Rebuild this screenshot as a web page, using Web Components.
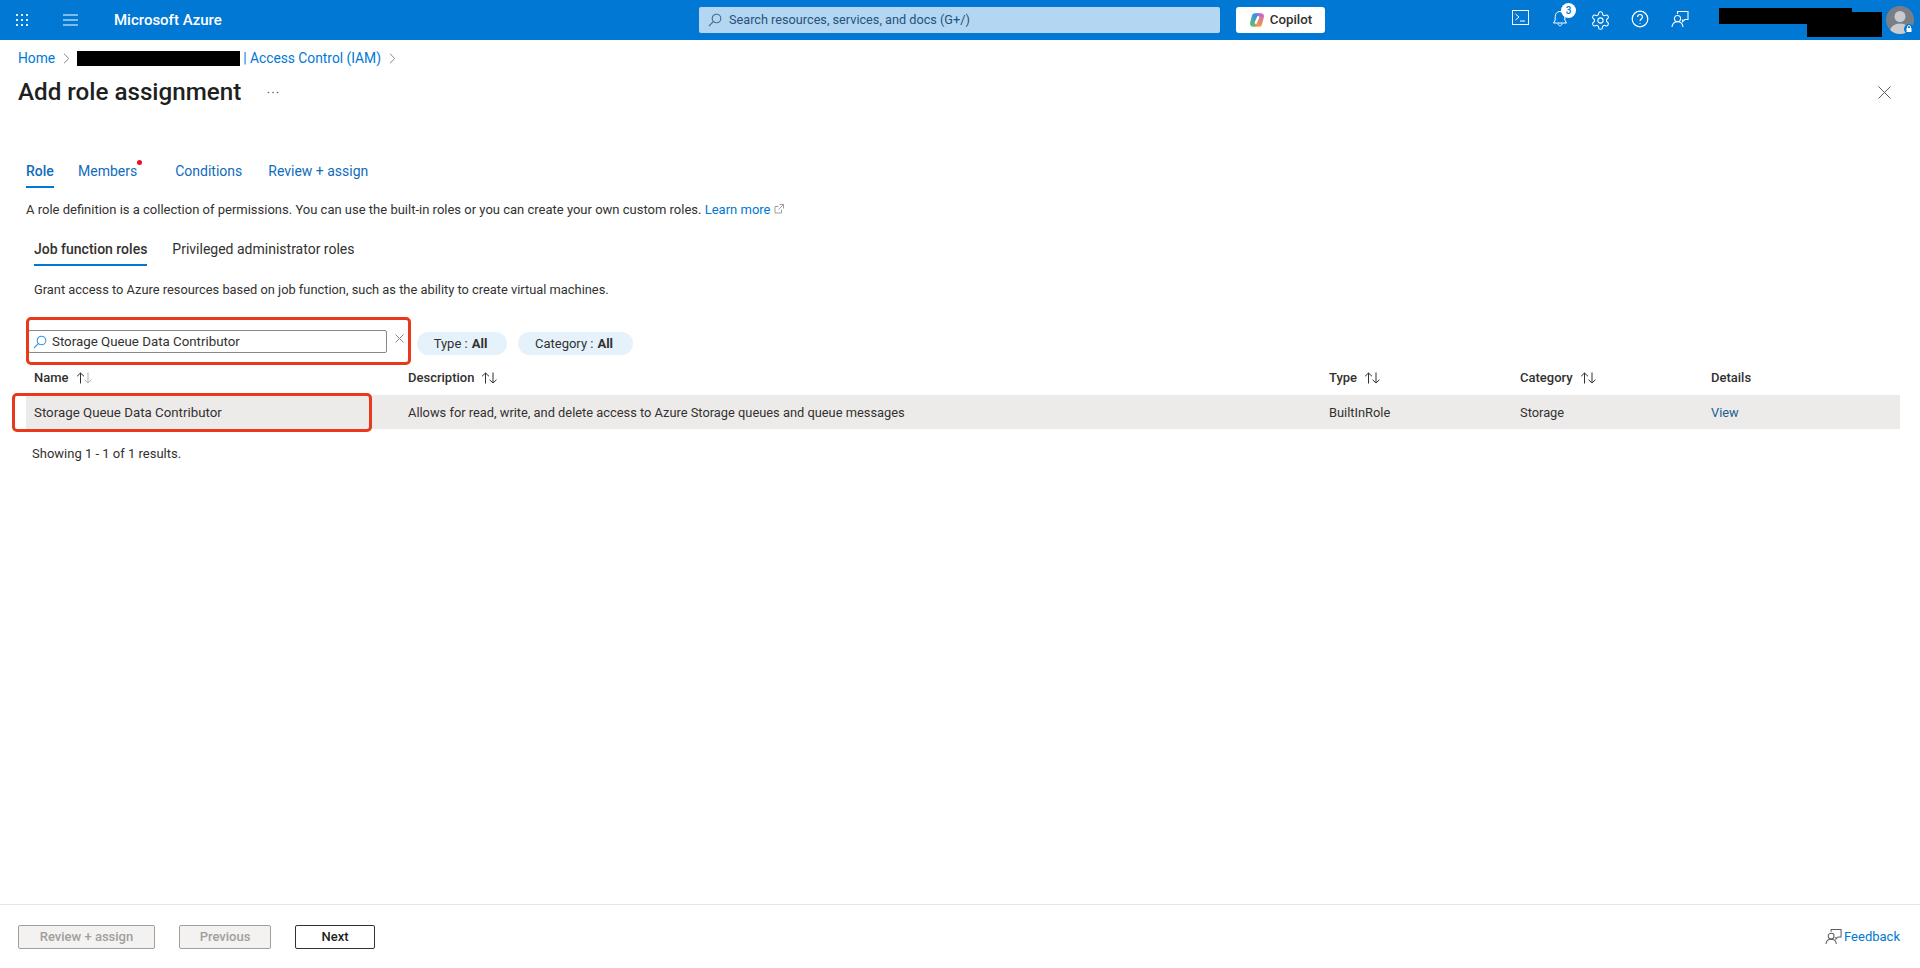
<!DOCTYPE html>
<html lang="en">
<head>
<meta charset="utf-8">
<title>Add role assignment - Microsoft Azure</title>
<style>
    html, body { margin: 0; height: 100%; }
    body {
        display: flex;
        flex-direction: column;
        height: 968px;
        overflow: hidden;
        background: #fff;
        color: #323130;
        font: 13px/20px Roboto, "Noto Sans", sans-serif;
    }
</style>
</head>
<body>
<az-topbar></az-topbar>
<az-breadcrumb></az-breadcrumb>
<az-blade-title>Add role assignment</az-blade-title>
<az-role-panel></az-role-panel>
<az-footer></az-footer>

<script>
const feedbackIcon = (size, color) => `
    <svg width="${size}" height="${size}" viewBox="0 0 18 18" fill="none" stroke="${color}" stroke-width="1.1">
        <path d="M6.5 4V1.5h10.5v8h-3.2l-2.3 2.2V9.5"/>
        <circle cx="6.5" cy="8.6" r="3.1"/>
        <path d="M1 17c.3-3.2 2.6-5.2 5.5-5.2S11.700 13.800 12 17"/>
    </svg>`;

customElements.define('az-topbar', class extends HTMLElement {
    constructor() {
        super();
        this.attachShadow({ mode: 'open' });
    }

    connectedCallback() {
        this.shadowRoot.innerHTML = `
        <style>
            :host { display: flex; align-items: center; flex: none; height: 40px; background: #0078d4; color: #fff; position: relative; }
            .waffle { display: grid; grid-template-columns: repeat(3, 2px); gap: 3px; margin-left: 16px; }
            .waffle i { width: 2px; height: 2px; background: #e3f0fa; }
            .burger { margin-left: 35px; display: flex; }
            .brand { margin-left: 36px; font-size: 15px; font-weight: 500; width: 232px; white-space: nowrap; }
            .search { margin-left: 353px; width: 521px; height: 26px; box-sizing: border-box; background: #b3d6f2; border-radius: 2px; display: flex; align-items: center; padding-left: 9px; color: #24527a; font-size: 12.700px; }
            .search svg { margin-right: 7px; }
            .copilot { margin-left: 16px; width: 89px; height: 26px; background: #fff; border-radius: 3px; display: flex; align-items: center; justify-content: center; gap: 5px; color: #323130; font-size: 13.300px; font-weight: 500; }
            .icon { width: 40px; display: flex; justify-content: center; position: relative; }
            .icons { display: flex; margin-left: 175px; }
            .badge { position: absolute; top: -7px; left: 21px; width: 15px; height: 15px; border-radius: 50%; background: #fff; color: #0078d4; font-size: 10px; font-weight: 500; line-height: 15px; text-align: center; }
            .redact { position: absolute; background: #000; }
            .avatar { position: absolute; right: 6px; top: 6px; }
        </style>
        <div class="waffle">${'<i></i>'.repeat(9)}</div>
        <span class="burger">
            <svg width="15" height="12" viewBox="0 0 15 12" stroke="#fff" stroke-width="1"><path d="M0 1h15M0 6h15M0 11h15"/></svg>
        </span>
        <span class="brand">Microsoft Azure</span>
        <div class="search">
            <svg width="14" height="14" viewBox="0 0 14 14" fill="none" stroke="#3f6d93" stroke-width="1.100"><circle cx="8.500" cy="5.500" r="4.300"/><path d="M5.300 8.700L1 13"/></svg>
            Search resources, services, and docs (G+/)
        </div>
        <div class="copilot">
            <svg width="16" height="16" viewBox="0 0 16 16">
                <defs>
                    <linearGradient id="cpa" x1="0.600" y1="0" x2="0.200" y2="1"><stop offset="0" stop-color="#2f8fe8"/><stop offset="1" stop-color="#5cc46a"/></linearGradient>
                    <linearGradient id="cpb" x1="0.500" y1="0" x2="0.600" y2="1"><stop offset="0" stop-color="#c45fd6"/><stop offset="1" stop-color="#f6a13c"/></linearGradient>
                </defs>
                <path fill="url(#cpa)" d="M5.500 1.200H10.500L7 14.800H4.200C1.800 14.800.5 12.800 1.100 10.700L3 3.600C3.400 2.200 4.300 1.200 5.500 1.200z"/>
                <path fill="url(#cpb)" d="M10.500 14.800H5.500L9 1.200H11.800C14.200 1.200 15.500 3.200 14.900 5.300L13 12.400C12.600 13.800 11.700 14.800 10.500 14.800z"/>
                <path stroke="#fff" stroke-width="2.400" stroke-linecap="round" d="M9.200 5.300L6.800 10.700"/>
            </svg>
            Copilot
        </div>
        <div class="icons">
            <span class="icon">
                <svg width="17" height="15" viewBox="0 0 17 15" fill="none" stroke="#fff" stroke-width="1"><rect x=".5" y=".5" width="16" height="14"/><path d="M3.500 4l3.500 3-3.500 3M8 11h5"/></svg>
            </span>
            <span class="icon">
                <svg width="16" height="17" viewBox="0 0 16 17" fill="none" stroke="#fff" stroke-width="1"><path d="M8 1.500c-3 0-4.800 2.200-4.800 5v3.500L1.500 13h13l-1.700-3V6.500c0-2.800-1.800-5-4.800-5zM6 13.500c0 1.300 1 2.300 2 2.300s2-1 2-2.300"/></svg>
                <span class="badge">3</span>
            </span>
            <span class="icon">
                <svg width="21" height="21" viewBox="0 0 24 24" fill="none" stroke="#fff" stroke-width="1.200"><path d="M12.220 2h-.44a2 2 0 0 0-2 2v.18a2 2 0 0 1-1 1.730l-.43.25a2 2 0 0 1-2 0l-.15-.08a2 2 0 0 0-2.730.73l-.22.38a2 2 0 0 0 .73 2.730l.15.1a2 2 0 0 1 1 1.720v.51a2 2 0 0 1-1 1.740l-.15.09a2 2 0 0 0-.73 2.730l.22.38a2 2 0 0 0 2.730.73l.15-.08a2 2 0 0 1 2 0l.43.25a2 2 0 0 1 1 1.730V20a2 2 0 0 0 2 2h.44a2 2 0 0 0 2-2v-.18a2 2 0 0 1 1-1.730l.43-.25a2 2 0 0 1 2 0l.15.08a2 2 0 0 0 2.730-.73l.22-.39a2 2 0 0 0-.73-2.730l-.15-.08a2 2 0 0 1-1-1.740v-.5a2 2 0 0 1 1-1.740l.15-.09a2 2 0 0 0 .73-2.730l-.22-.38a2 2 0 0 0-2.730-.73l-.15.08a2 2 0 0 1-2 0l-.43-.25a2 2 0 0 1-1-1.730V4a2 2 0 0 0-2-2z"/><circle cx="12" cy="12" r="3"/></svg>
            </span>
            <span class="icon">
                <svg width="18" height="18" viewBox="0 0 18 18" fill="none" stroke="#fff" stroke-width="1.200"><circle cx="9" cy="9" r="7.800"/><path d="M6.500 7c0-1.500 1.100-2.500 2.500-2.500S11.500 5.500 11.500 7c0 1.900-2.500 2-2.500 4"/><circle cx="9" cy="13.300" r=".6" fill="#fff" stroke="none"/></svg>
            </span>
            <span class="icon">${feedbackIcon(18, '#fff')}</span>
        </div>
        <span class="redact" style="left:1719px;top:8px;width:133px;height:16px"></span>
        <span class="redact" style="left:1807px;top:12px;width:75px;height:25px"></span>
        <svg class="avatar avatar-svg" width="28" height="28" viewBox="0 0 28 28">
            <defs><clipPath id="av"><circle cx="14" cy="14" r="14"/></clipPath></defs>
            <circle cx="14" cy="14" r="14" fill="#7a7f87"/>
            <g clip-path="url(#av)" fill="#c9cbce"><circle cx="14" cy="10.500" r="5.500"/><ellipse cx="14" cy="25" rx="10" ry="7.500"/></g>
            <circle cx="23" cy="23" r="5" fill="#0078d4"/>
            <rect x="20.500" y="22" width="5" height="4" rx=".6" fill="#fff"/>
            <path d="M21.500 22v-1a1.500 1.500 0 0 1 3 0v1" fill="none" stroke="#fff" stroke-width=".9"/>
        </svg>
        `;
    }
});

customElements.define('az-breadcrumb', class extends HTMLElement {
    constructor() {
        super();
        this.attachShadow({ mode: 'open' });
    }

    connectedCallback() {
        const chevron = `<svg width="7" height="11" viewBox="0 0 7 11" fill="none" stroke="#8a8886" stroke-width="1"><path d="M1 .8l4.800 4.700L1 10.200"/></svg>`;
        this.shadowRoot.innerHTML = `
        <style>
            :host { display: flex; align-items: center; flex: none; height: 36px; padding-left: 18px; color: #0078d4; font-size: 13.800px; }
            svg { margin: 0 7px 0 8px; }
            .redact { width: 163px; height: 15px; background: #000; margin-right: 3px; }
        </style>
        <span>Home</span>${chevron}
        <span class="redact"></span>
        <span>| Access Control (IAM)</span>${chevron}
        `;
    }
});

customElements.define('az-blade-title', class extends HTMLElement {
    constructor() {
        super();
        this.attachShadow({ mode: 'open' });
    }

    connectedCallback() {
        this.shadowRoot.innerHTML = `
        <style>
            :host { display: flex; align-items: center; flex: none; height: 32px; padding: 0 29px 0 18px; }
            h1 { margin: 0; font-size: 24.200px; font-weight: 500; line-height: 32px; color: #201f1e; white-space: nowrap; }
            .more { margin-left: 26px; display: flex; }
            .close { margin-left: auto; display: flex; }
        </style>
        <h1><slot></slot></h1>
        <span class="more"><svg width="12" height="3" viewBox="0 0 12 3" fill="#605e5c"><circle cx="1.500" cy="1.500" r=".8"/><circle cx="6" cy="1.500" r=".8"/><circle cx="10.500" cy="1.500" r=".8"/></svg></span>
        <span class="close"><svg width="13" height="13" viewBox="0 0 13 13" stroke="#605e5c" stroke-width="1"><path d="M.5.5l12 12M12.500.5l-12 12"/></svg></span>
        `;
    }
});

customElements.define('az-tab', class extends HTMLElement {
    constructor() {
        super();
        this.attachShadow({ mode: 'open' });
    }

    connectedCallback() {
        this.shadowRoot.innerHTML = `
        <style>
            :host { display: block; height: 33px; box-sizing: border-box; line-height: 33px; white-space: nowrap; color: var(--tab-color, #0f6cbd); position: relative; font-size: 14px; }
            :host([selected]) { border-bottom: 2.500px solid #0078d4; font-weight: 500; }
            .dot { position: absolute; top: 5px; right: -5px; width: 5px; height: 5px; border-radius: 50%; background: #e81123; }
        </style>
        <slot></slot>
        ${this.hasAttribute('dot') ? '<span class="dot"></span>' : ''}
        `;
    }
});

customElements.define('az-filter-pill', class extends HTMLElement {
    constructor() {
        super();
        this.attachShadow({ mode: 'open' });
    }

    connectedCallback() {
        this.shadowRoot.innerHTML = `
        <style>
            :host { display: flex; align-items: center; justify-content: center; box-sizing: border-box; height: 23px; padding-right: 3px; border-radius: 12px; background: #e6f2fb; margin-top: 2px; white-space: nowrap; gap: 4px; font-size: 13px; }
            b { font-weight: 700; }
        </style>
        <span>${this.getAttribute('label')} :</span><b><slot></slot></b>
        `;
    }
});

customElements.define('az-role-panel', class extends HTMLElement {
    constructor() {
        super();
        this.attachShadow({ mode: 'open' });
    }

    connectedCallback() {
        const sort = (faded) => `
            <svg class="sort" width="17" height="12" viewBox="0 0 17 12" fill="none" stroke-width="1">
                <path stroke="#323130" d="M4.500 11.500V1M1 4.300L4.500 1 8 4.300"/>
                <path stroke="${faded ? '#b3b0ad' : '#323130'}" d="M12 .5V11M8.500 7.700l3.500 3.300 3.500-3.300"/>
            </svg>`;
        this.shadowRoot.innerHTML = `
        <style>
            :host { display: block; flex: 1; position: relative; padding-top: 47px; min-height: 0; }
            .tabs { display: flex; margin-left: 26px; }
            .tabs az-tab:nth-child(1) { width: 28px; margin-right: 24px; }
            .tabs az-tab:nth-child(2) { margin-right: 38px; }
            .tabs az-tab:nth-child(3) { margin-right: 26px; }
            .desc { margin: 12px 0 0 26px; white-space: nowrap; }
            .desc a { color: #0078d4; text-decoration: none; }
            .desc svg { margin-left: 4px; }
            .subtabs { display: flex; gap: 25px; margin: 13px 0 0 34px; --tab-color: #323130; }
            .grant { margin: 14px 0 0 34px; font-size: 12.850px; }
            .toolbar { display: flex; align-items: flex-start; margin: 30px 0 0 28px; }
            .input { width: 359px; height: 23px; box-sizing: border-box; border: 1px solid #8a8886; border-radius: 2px; display: flex; align-items: center; padding-left: 4px; gap: 5px; line-height: 21px; font-size: 13.300px; }
            .clear { width: 24px; height: 17px; margin-right: 6px; display: flex; align-items: center; justify-content: center; }
            az-filter-pill:nth-of-type(1) { width: 90px; margin-right: 11px; }
            az-filter-pill:nth-of-type(2) { width: 115px; }
            .grid { display: grid; grid-template-columns: 374px 921px 191px 191px 1fr; margin: 7px 20px 0 26px; }
            .grid > div { padding-left: 8px; display: flex; align-items: center; white-space: nowrap; }
            .head { height: 30px; box-sizing: border-box; padding-top: 1px; margin-bottom: 3px; font-weight: 500; }
            .head .sort { margin-left: 7px; }
            .row { height: 34px; box-sizing: border-box; padding-top: 1px; background: #edebe9; font-size: 12.850px; }
            .row.name { font-size: 13.300px; }
            .row a { color: #1b5e92; text-decoration: none; }
            .count { margin: 15px 0 0 32px; }
            .mark { position: absolute; box-sizing: border-box; border: 3px solid #e8391c; border-radius: 5px; pointer-events: none; }
        </style>
        <div class="tabs">
            <az-tab selected>Role</az-tab>
            <az-tab dot>Members</az-tab>
            <az-tab>Conditions</az-tab>
            <az-tab>Review + assign</az-tab>
        </div>
        <div class="desc">A role definition is a collection of permissions. You can use the built-in roles or you can create your own custom roles. <a href="#">Learn more</a><svg width="10" height="10" viewBox="0 0 10 10" fill="none" stroke="#8a8886" stroke-width=".8"><path d="M7.500 5.500V9H1V2.500h3.500M5.500.5h4v4M9.500.5L4.500 5.500"/></svg></div>
        <div class="subtabs">
            <az-tab selected>Job function roles</az-tab>
            <az-tab>Privileged administrator roles</az-tab>
        </div>
        <div class="grant">Grant access to Azure resources based on job function, such as the ability to create virtual machines.</div>
        <div class="toolbar">
            <div class="input">
                <svg width="14" height="14" viewBox="0 0 14 14" fill="none" stroke="#3d96dc" stroke-width="1.100"><circle cx="8.500" cy="5.500" r="4.300"/><path d="M5.300 8.700L1 13"/></svg>
                <span>Storage Queue Data Contributor</span>
            </div>
            <span class="clear"><svg width="9" height="9" viewBox="0 0 9 9" stroke="#8a8886" stroke-width="1"><path d="M.5.5l8 8M8.500.5l-8 8"/></svg></span>
            <az-filter-pill label="Type">All</az-filter-pill>
            <az-filter-pill label="Category">All</az-filter-pill>
        </div>
        <div class="grid">
            <div class="head">Name${sort(true)}</div>
            <div class="head">Description${sort(false)}</div>
            <div class="head">Type${sort(false)}</div>
            <div class="head">Category${sort(false)}</div>
            <div class="head">Details</div>
            <div class="row name">Storage Queue Data Contributor</div>
            <div class="row">Allows for read, write, and delete access to Azure Storage queues and queue messages</div>
            <div class="row">BuiltInRole</div>
            <div class="row">Storage</div>
            <div class="row"><a href="#">View</a></div>
        </div>
        <div class="count">Showing 1 - 1 of 1 results.</div>
        <span class="mark" style="left:26px;top:209px;width:385px;height:48px"></span>
        <span class="mark" style="left:12px;top:285px;width:360px;height:39px"></span>
        `;
    }
});

customElements.define('az-button', class extends HTMLElement {
    constructor() {
        super();
        this.attachShadow({ mode: 'open' });
    }

    connectedCallback() {
        this.shadowRoot.innerHTML = `
        <style>
            :host { display: flex; align-items: center; justify-content: center; box-sizing: border-box; height: 24px; border: 1px solid #323130; border-radius: 2px; font-weight: 500; color: #201f1e; }
            :host([disabled]) { background: #f3f2f1; border-color: #a19f9d; color: #a19f9d; }
        </style>
        <slot></slot>
        `;
    }
});

customElements.define('az-footer', class extends HTMLElement {
    constructor() {
        super();
        this.attachShadow({ mode: 'open' });
    }

    connectedCallback() {
        this.shadowRoot.innerHTML = `
        <style>
            :host { display: flex; align-items: center; flex: none; height: 64px; box-sizing: border-box; border-top: 1px solid #e5e5e5; padding: 0 20px 0 18px; }
            az-button:nth-of-type(1) { width: 137px; margin-right: 24px; }
            az-button:nth-of-type(2) { width: 92px; margin-right: 24px; }
            az-button:nth-of-type(3) { width: 80px; }
            .feedback { margin-left: auto; display: flex; align-items: center; gap: 2px; color: #0078d4; }
        </style>
        <az-button disabled>Review + assign</az-button>
        <az-button disabled>Previous</az-button>
        <az-button>Next</az-button>
        <span class="feedback">${feedbackIcon(17, '#605e5c')}Feedback</span>
        `;
    }
});
</script>
</body>
</html>
